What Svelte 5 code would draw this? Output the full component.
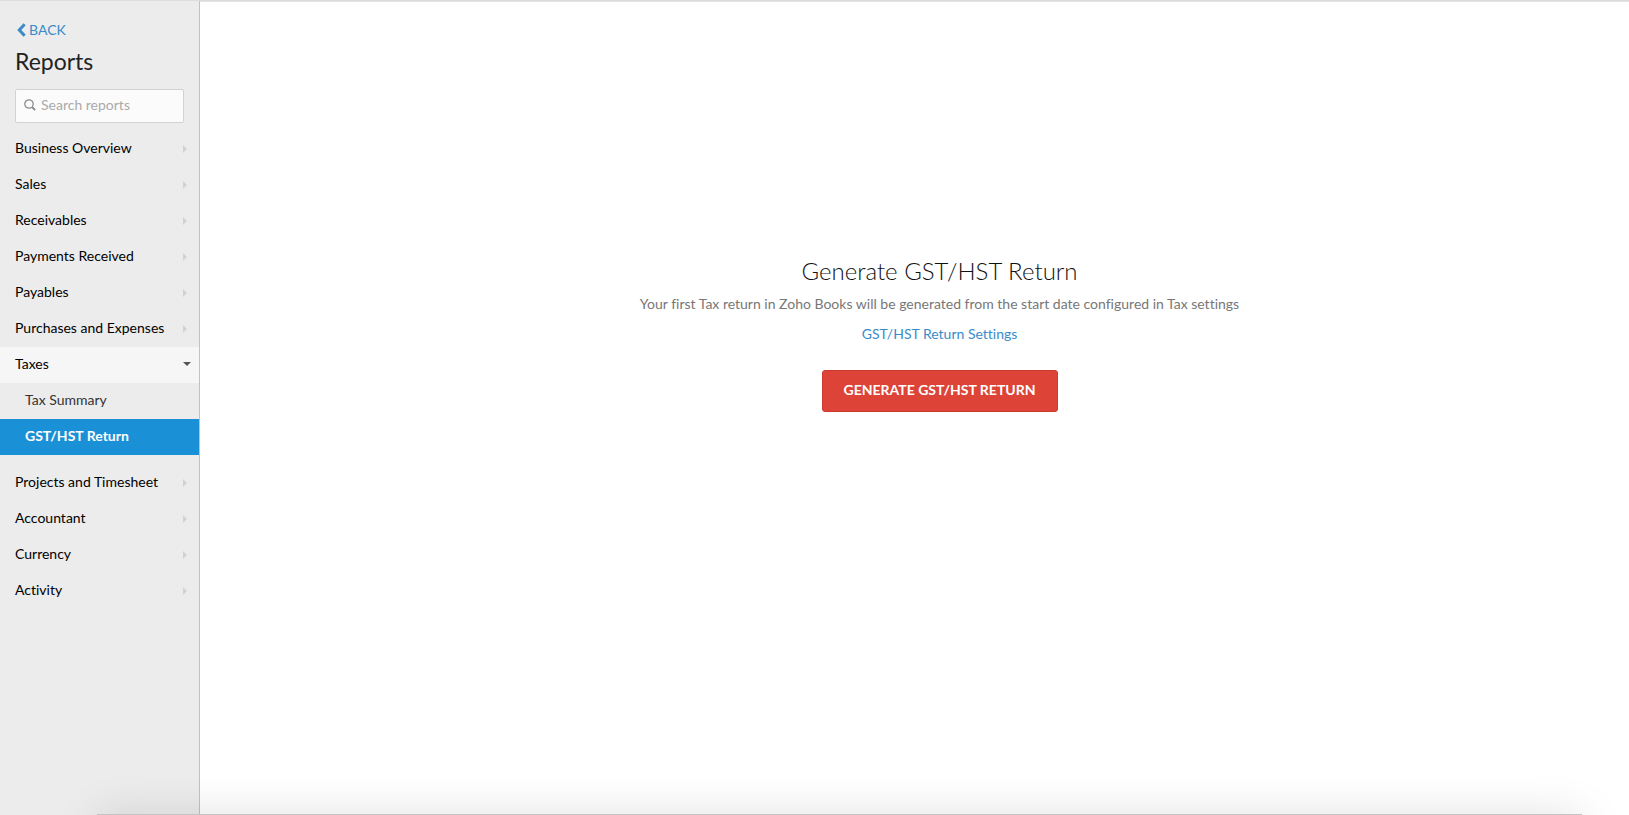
<script lang="ts">
  type Report = { name: string; href: string };
  type Group = { name: string; reports?: Report[] };

  const groups: Group[] = [
    { name: 'Business Overview' },
    { name: 'Sales' },
    { name: 'Receivables' },
    { name: 'Payments Received' },
    { name: 'Payables' },
    { name: 'Purchases and Expenses' },
    {
      name: 'Taxes',
      reports: [
        { name: 'Tax Summary', href: '#tax-summary' },
        { name: 'GST/HST Return', href: '#gst-hst-return' },
      ],
    },
    { name: 'Projects and Timesheet' },
    { name: 'Accountant' },
    { name: 'Currency' },
    { name: 'Activity' },
  ];

  let search = $state('');
  let openGroup = $state('Taxes');
  let activeReport = $state('GST/HST Return');

  const toggle = (name: string) => {
    openGroup = openGroup === name ? '' : name;
  };
</script>

<div class="layout">
  <aside class="sidebar">
    <a class="back" href="#back">
      <svg width="9" height="14" viewBox="0 0 9 14" aria-hidden="true">
        <path d="M7.6 1.2 2.3 7l5.3 5.8" fill="none" stroke="currentColor" stroke-width="3" />
      </svg>
      BACK
    </a>
    <h1 class="title">Reports</h1>

    <label class="search">
      <svg width="12" height="12" viewBox="0 0 12 12" aria-hidden="true">
        <circle cx="5" cy="5" r="4.2" fill="none" stroke="currentColor" stroke-width="1.3" />
        <path d="m8 8 3.2 3.2" fill="none" stroke="currentColor" stroke-width="1.9" />
      </svg>
      <input type="text" placeholder="Search reports" aria-label="Search reports" bind:value={search} />
    </label>

    <nav>
      {#each groups as group}
        {@const open = openGroup === group.name}
        <button class="group" class:group--open={open} aria-expanded={open} onclick={() => toggle(group.name)}>
          {group.name}
          {#if open}
            <svg width="8" height="4" viewBox="0 0 8 4" aria-hidden="true">
              <path d="M0 0h8L4 4z" fill="#555" />
            </svg>
          {:else}
            <svg class="closed" width="4" height="8" viewBox="0 0 4 8" aria-hidden="true">
              <path d="M0 0v8l4-4z" fill="#d2d2d2" />
            </svg>
          {/if}
        </button>
        {#if open && group.reports}
          <ul class="reports">
            {#each group.reports as report}
              <li>
                <a
                  class="report"
                  class:report--active={activeReport === report.name}
                  href={report.href}
                  onclick={() => (activeReport = report.name)}>{report.name}</a
                >
              </li>
            {/each}
          </ul>
        {/if}
      {/each}
    </nav>
  </aside>

  <main class="content">
    <h2>Generate GST/HST Return</h2>
    <p>Your first Tax return in Zoho Books will be generated from the start date configured in Tax settings</p>
    <a class="settings" href="#settings">GST/HST Return Settings</a>
    <button class="generate">GENERATE GST/HST RETURN</button>
  </main>

  <div class="dock-shadow"></div>
</div>

<style>
  :global(body) {
    margin: 0;
  }

  .layout {
    position: relative;
    display: flex;
    min-height: 100vh;
    box-sizing: border-box;
    overflow: hidden;
    border-top: 1px solid #dcdcdc;
    background: #fff;
    color: #000;
    font-family: Lato, 'Liberation Sans', sans-serif;
    font-size: 14px;
    font-variant-ligatures: none;
    line-height: 20px;
  }

  a {
    color: #398bc9;
    text-decoration: none;
  }

  button {
    border: 0;
    font: inherit;
    font-variant-ligatures: none;
    cursor: pointer;
  }

  .sidebar {
    flex: 0 0 200px;
    min-width: 0;
    box-sizing: border-box;
    padding-top: 19px;
    border-right: 1px solid #c2c2c2;
    background: #ececec;
  }

  .back {
    display: flex;
    align-items: center;
    gap: 3px;
    margin: 0 15px 0 17px;
  }

  .title {
    margin: 7px 15px 13px;
    font-size: 23px;
    font-weight: 400;
    line-height: 29px;
    color: #222;
  }

  .search {
    display: flex;
    align-items: center;
    gap: 5px;
    box-sizing: border-box;
    height: 34px;
    margin: 0 15px 8px;
    padding: 0 8px 2px;
    border: 1px solid #d2d2d2;
    border-radius: 2px;
    background: #fbfbfb;
    color: #8c8c8c;
  }

  .search input {
    flex: 1;
    min-width: 0;
    padding: 0;
    border: 0;
    outline: 0;
    background: transparent;
    font: inherit;
    color: #333;
  }

  .search input::placeholder {
    color: #aaa;
    opacity: 1;
  }

  .group {
    display: flex;
    align-items: center;
    justify-content: space-between;
    width: 100%;
    height: 36px;
    padding: 0 8px 2px 15px;
    background: transparent;
    color: #000;
    white-space: nowrap;
  }

  .group--open {
    background: #f6f6f6;
  }

  .closed {
    margin: 2px 4px 0 0;
  }

  .reports {
    margin: 0 0 10px;
    padding: 0;
    list-style: none;
  }

  .report {
    display: block;
    padding: 7px 8px 9px 25px;
    color: #333;
  }

  .report--active {
    background: #1a90d6;
    color: #fff;
    font-weight: 700;
  }

  .content {
    flex: 1;
    display: flex;
    flex-direction: column;
    align-items: center;
    padding: 254px 0 60px 50px;
    border-top: 1px solid #e4e4e4;
  }

  h2 {
    margin: 0;
    font-size: 24px;
    font-weight: 300;
    line-height: 30px;
    color: #111;
  }

  p {
    margin: 8px 0 10px;
    color: #777;
  }

  .generate {
    height: 42px;
    margin-top: 26px;
    padding: 0 21px 2px;
    border: 1px solid #cb3a2d;
    border-radius: 3px;
    background: #dd4437;
    color: #fff;
    font-weight: 700;
  }

  /* shadow cast upwards by the window below the fold */
  .dock-shadow {
    position: absolute;
    right: 47px;
    bottom: -20px;
    left: 97px;
    height: 21px;
    background: #c4c4c4;
    box-shadow: 0 4px 44px rgba(0, 0, 0, 0.18);
    pointer-events: none;
  }
</style>
